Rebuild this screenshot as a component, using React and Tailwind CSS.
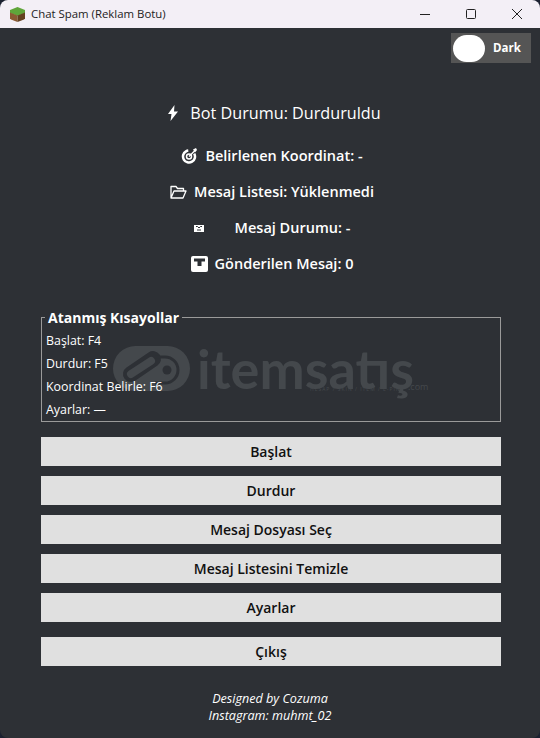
import React from 'react';

const font = "font-['Open_Sans','Noto_Sans',sans-serif]";

const BoltIcon = () => (
    <svg width="10" height="16" viewBox="0 0 10 16" className="shrink-0">
        <path d="M6.500 0 0 9h3.500L2.500 16 10 6.500H6z" fill="#fff" />
    </svg>
);

const TargetIcon = () => (
    <svg width="17" height="16" viewBox="0 0 17 16" fill="none" className="shrink-0">
        <circle cx="8" cy="8.500" r="6" stroke="#fff" strokeWidth="2.500" strokeDasharray="30 8" transform="rotate(-30 8 8.500)" />
        <circle cx="8" cy="8.500" r="2.500" stroke="#fff" strokeWidth="1.500" />
        <path d="M8 8.500 14 2.500" stroke="#fff" strokeWidth="1.500" />
        <path d="M12 1.500 15 0l1 2-2 2.500z" fill="#fff" />
    </svg>
);

const FolderIcon = () => (
    <svg width="17" height="14" viewBox="0 0 17 14" fill="none" className="shrink-0">
        <path d="M1 13V1.500h5l1.500 2h6v2.500M1 13l3-7h12l-3 7z" stroke="#fff" strokeWidth="1.300" strokeLinejoin="round" />
    </svg>
);

const MailIcon = () => (
    <svg width="10" height="7" viewBox="0 0 10 7" className="shrink-0">
        <rect width="10" height="7" fill="#fff" />
        <path d="M2 1.500h1.500L5 3l1.500-1.500H8M3 5h4" stroke="#2d3035" strokeWidth="1" fill="none" />
    </svg>
);

const InboxIcon = () => (
    <svg width="17" height="16" viewBox="0 0 17 16" className="shrink-0">
        <rect width="17" height="16" rx="2" fill="#fff" />
        <path d="M3 2.500h11v3h-3.500V10h-4V5.500H3z" fill="#2d3035" />
    </svg>
);

const StatusRow = ({ icon, gap, children }) => (
    <div className={`flex items-center justify-center h-[36px] text-[14.500px] leading-none font-semibold text-white ${gap}`}>
        {icon}
        <span>{children}</span>
    </div>
);

const ActionButton = ({ children, className = '' }) => (
    <button className={`block w-full h-[29px] bg-[#e0e0e0] text-[14px] font-semibold text-[#111] ${className}`}>
        {children}
    </button>
);

const App = () => {
    return (
        <div className={`w-[540px] h-[738px] relative overflow-hidden bg-[#1b2130] ${font}`}>
            <div className="h-[28px] bg-[#f3eff6] rounded-t-lg flex items-center pl-[10px]">
                <svg width="15" height="15" viewBox="0 0 15 15">
                    <path d="M7.500 0 15 3v3L7.500 9 0 6V3z" fill="#5fa53a" />
                    <path d="M0 5.500 7.500 8.500V15L1 12.500 0 11.500z" fill="#8a5a33" />
                    <path d="M15 5.500 7.500 8.500V15l6.500-2.500 1-1z" fill="#63401f" />
                </svg>
                <span className="ml-[6px] text-[11.400px] text-[#222]">Chat Spam (Reklam Botu)</span>
                <div className="ml-auto flex items-center h-full text-[#222]">
                    <div className="w-[46px] flex justify-center">
                        <svg width="10" height="10" viewBox="0 0 10 10"><path d="M0 5.500h10" stroke="#222" /></svg>
                    </div>
                    <div className="w-[46px] flex justify-center">
                        <svg width="10" height="10" viewBox="0 0 10 10"><rect x=".5" y=".5" width="9" height="9" rx="1" fill="none" stroke="#222" /></svg>
                    </div>
                    <div className="w-[46px] flex justify-center">
                        <svg width="10" height="10" viewBox="0 0 10 10"><path d="M0 0l10 10M10 0 0 10" stroke="#222" /></svg>
                    </div>
                </div>
            </div>

            <div className="h-[710px] bg-[#2d3035] rounded-b-lg relative flex flex-col">
                {/* Watermark */}
                <div className="absolute left-[113px] top-[317px] flex items-start pointer-events-none">
                    <svg width="78" height="47" viewBox="0 0 78 47" fill="none">
                        <rect x="0" y="1" width="77" height="45" rx="22.500" fill="#44484c" />
                        <path d="M18 29 40 14" stroke="#2d3035" strokeWidth="16" strokeLinecap="round" />
                        <path d="M18 29 38 16" stroke="#44484c" strokeWidth="8" strokeLinecap="round" />
                        <path d="M42 12h10a13 13 0 0 1 0 26H42" stroke="#2d3035" strokeWidth="3" />
                        <circle cx="54" cy="25" r="4.500" fill="#2d3035" />
                    </svg>
                    <div className="relative ml-[6px] mt-[6px]">
                        <span className="block font-['Lato',sans-serif] text-[54px] leading-[36px] font-bold text-[#44484c]">itemsatış</span>
                        <span className="absolute left-[113px] top-[36px] text-[5px] leading-none whitespace-nowrap tracking-[1px] text-[#44484c]">HESAP / SKIN / ITEM / E-PIN</span>
                        <span className="absolute left-[211px] top-[31px] text-[9px] leading-none text-[#44484c]">.com</span>
                    </div>
                </div>

                <div className="relative flex justify-end pt-[5px] pr-[9px]">
                    <div className="w-[80px] h-[30px] bg-[#555555] flex items-center pl-[2px]">
                        <div className="w-[32px] h-[27px] rounded-full bg-white" />
                        <span className="ml-[8px] text-[11.500px] font-bold text-white">Dark</span>
                    </div>
                </div>

                <div className="relative mt-[28px] pl-[9px] flex items-center justify-center gap-[12px] h-[44px] text-[16.200px] font-medium text-white">
                    <BoltIcon />
                    <span>Bot Durumu: Durduruldu</span>
                </div>
                <div className="relative mt-[3px] pl-[4px]">
                    <StatusRow icon={<TargetIcon />} gap="gap-[7px]">Belirlenen Koordinat: -</StatusRow>
                    <StatusRow icon={<FolderIcon />} gap="gap-[7px]">Mesaj Listesi: Yüklenmedi</StatusRow>
                    <StatusRow icon={<MailIcon />} gap="gap-[31px]">Mesaj Durumu: -</StatusRow>
                    <StatusRow icon={<InboxIcon />} gap="gap-[7px]">Gönderilen Mesaj: 0</StatusRow>
                </div>

                <div className="relative ml-[41px] mr-[39px] mt-[35px] h-[105px] border border-[#9a9a9a] pt-[11px] pl-[4px] text-[12.400px] leading-[23px] text-white">
                    <span className="absolute -top-[9px] left-[3px] px-[3px] bg-[#2d3035] text-[14px] leading-[17px] font-bold">Atanmış Kısayollar</span>
                    <div>Başlat: F4</div>
                    <div>Durdur: F5</div>
                    <div>Koordinat Belirle: F6</div>
                    <div>Ayarlar: —</div>
                </div>

                <div className="relative ml-[41px] mr-[39px] mt-[15px] flex flex-col gap-[10px]">
                    <ActionButton>Başlat</ActionButton>
                    <ActionButton>Durdur</ActionButton>
                    <ActionButton>Mesaj Dosyası Seç</ActionButton>
                    <ActionButton>Mesaj Listesini Temizle</ActionButton>
                    <ActionButton>Ayarlar</ActionButton>
                    <ActionButton className="mt-[5px]">Çıkış</ActionButton>
                </div>

                <div className="relative mt-[24px] text-center text-[12.600px] leading-[17px] italic text-white">
                    <div>Designed by Cozuma</div>
                    <div>Instagram: muhmt_02</div>
                </div>
            </div>
        </div>
    );
};

export default App;
